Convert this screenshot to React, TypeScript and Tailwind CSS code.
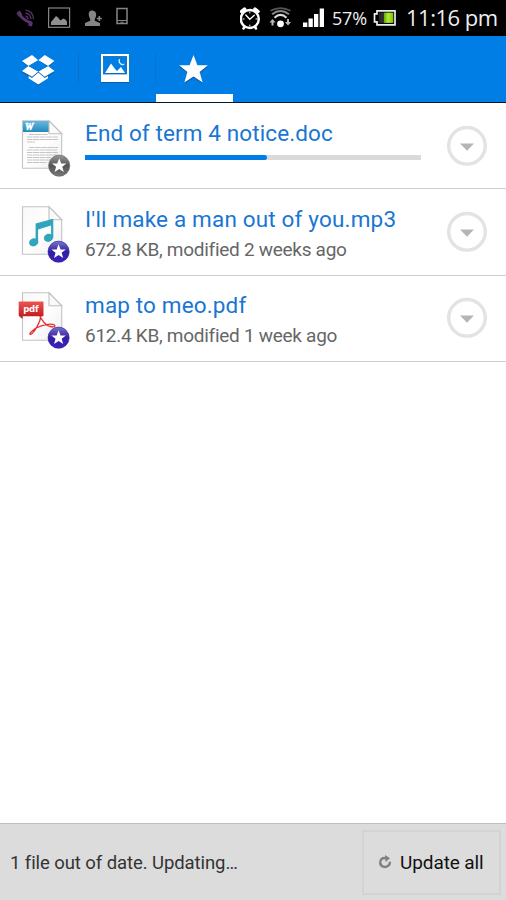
import React from "react";

const STAR = "M0 -10 L2.6 -3.2 L9.6 -3.1 L4.1 1.3 L6.1 8.3 L0 4.3 L-6.1 8.3 L-4.1 1.3 L-9.6 -3.1 L-2.6 -3.2Z";

function StatusBar() {
  return (
    <header className="flex h-9 shrink-0 bg-black text-[#eeeeee]">
      <svg className="h-9 w-[240px] shrink-0" viewBox="0 0 240 36">
        <g fill="none" stroke="#58346b" strokeWidth="1.3">
          <path d="M19 11.5Q20.500 19.500 31.500 23" strokeWidth="3" />
          <path d="M18 12l2.800 4M28.600 23.500l3.800 1" strokeWidth="4" />
          <path d="M25.500 16.200q2.200.3 2.700 3M25.500 13.200q5 .5 5.400 6M25.500 10.200q7.500.7 8 9" />
        </g>
        <rect x="48.600" y="8" width="21" height="19.300" fill="none" stroke="#858585" strokeWidth="1.200" />
        <path d="M51 25v-3l3-3.500 2-2.500 2 1.500 2.500 3 3-2 2.500 1.500 1 2v3z" fill="#909090" />
        <path d="M92 10.500c-2.700 0-3.500 2.200-3.200 4.500.2 2 1 3 1.400 4v1.800l-5.200 2.200v2.900h15v-2.900l-5.200-2.200V19c.4-1 1.200-2 1.400-4 .3-2.300-1.500-4.500-4.200-4.500z" fill="#858585" />
        <path d="M99.300 15.500v6M96.300 18.500h6" stroke="#000" strokeWidth="4" />
        <path d="M99.300 16v5M96.800 18.500h5" stroke="#858585" strokeWidth="1.600" />
        <rect x="117" y="8.500" width="10" height="15" fill="none" stroke="#858585" strokeWidth="1.500" />
        <path d="M117 20.500h10M120.500 22.200h3" stroke="#858585" strokeWidth="1" />
      </svg>
      <svg className="h-9 w-[90px] shrink-0" viewBox="240 0 90 36">
        <g fill="none" stroke="#fff" strokeLinecap="round">
          <circle cx="249.800" cy="19" r="9" strokeWidth="2.400" />
          <path d="M241.500 11.500l3-2.500M258 11.500l-3-2.500" strokeWidth="3.500" />
          <path d="M244.500 27l-1 1.500M255 27l1 1.500" strokeWidth="2.500" />
          <path d="M245.800 15l4 4.300 4.500-4" strokeWidth="1.300" />
          <path d="M249.800 12v1M249.800 25v1M243 19h1M256 19h1" strokeWidth="1" />
        </g>
        <circle cx="280.500" cy="23.800" r="3.400" fill="#fff" />
        <path d="M274.500 17.700q6-5.500 12 0" fill="none" stroke="#ddd" strokeWidth="2.200" />
        <path d="M272 14.200q8.500-6.500 17 0" fill="none" stroke="#8a8a8a" strokeWidth="2" />
        <path d="M270.500 10.800q10-5.500 20 0" fill="none" stroke="#555" strokeWidth="1.800" />
        <path d="M272.500 19l3 3.600h-2v3h-2v-3h-2zM288 25.600l3-3.600h-2v-3h-2v3h-2z" fill="#bbb" />
        <path d="M303 22.500h4.300V27H303zM308.500 18.500h4.300V27h-4.300zM314 14h4.300v13H314zM319.700 8.500h4.300V27h-4.300z" fill="#fff" />
      </svg>
      <span className="mt-[5px] w-[40px] whitespace-nowrap pl-[2px] font-['Open_Sans',sans-serif] text-[18px] leading-[27px] tracking-[-0.2px]">57%</span>
      <svg className="h-9 w-[30px] shrink-0" viewBox="370 0 30 36">
        <defs>
          <linearGradient id="charge"><stop stopColor="#222" /><stop offset=".36" stopColor="#333" /><stop offset=".4" stopColor="#6fbb00" /><stop offset=".65" stopColor="#b2e840" /><stop offset="1" stopColor="#79c400" /></linearGradient>
        </defs>
        <path d="M377 10.800h18v14h-18v-3h-2.500v-8h2.500z" fill="#000" stroke="#eee" strokeWidth="1.700" />
        <path d="M378.700 12.600h14.600v10.300h-14.600z" fill="url(#charge)" />
      </svg>
      <span className="mt-[3px] whitespace-nowrap pl-1.5 font-['Open_Sans',sans-serif] text-[22px] leading-[28px] tracking-[-0.5px]">11:16 pm</span>
    </header>
  );
}

function Tabs() {
  return (
    <nav className="flex h-[67px] shrink-0 border-b border-[#02172c] bg-[#007ee6]">
      <button className="my-[17px] w-[78.500px] border-r border-[#0873cd]" aria-label="Files">
        <svg className="-mt-[1px] ml-[18px] size-10" viewBox="18 52 40 40">
          <g transform="translate(0 1)" fill="#07549a" opacity=".65"><path d="M22 61l10-6 6.300 5.300 6.500-5.300 9.700 6-6.500 5 6.500 5-6 4.500-10.200 9.600L28 75.500 22 71l6.500-5z" /></g>
          <path d="M32 55l6.300 5.300L28.500 66 22 61zM44.700 55l9.800 6-6.500 5-9.700-5.700zM28.500 66l9.800 5.500-6.300 5.200L22 71zM48 66l6.500 5-9.800 5.700-6.400-5.200zM38.300 72.500l6.500 5.400 3.200-1.800v2.100l-9.700 6.300-9.700-6.300v-2.100l3.400 1.800z" fill="#fff" />
          <path d="M28.500 66l9.800-5.700L48 66l-9.700 5.500z" fill="#007ee6" />
        </svg>
      </button>
      <button className="my-[17px] w-[77px] border-r border-[#0873cd]" aria-label="Photos">
        <svg className="ml-[18px] size-10" viewBox="97 53 40 40">
          <rect x="101" y="55" width="28" height="28" fill="#075ba8" />
          <rect x="101" y="54" width="28" height="28" fill="#fff" />
          <rect x="103.600" y="56.500" width="23" height="17.500" fill="#007ee6" stroke="#0755a0" strokeWidth=".7" />
          <path d="M105 73l6-9.500 4.500 6 1.500 1.500 4-4 4 6z" fill="#fff" />
          <path d="M119.500 59c-.8 3.400 1.600 6 4.800 5.200-2.800 2.200-7-1.700-4.800-5.200z" fill="#fff" stroke="#fff" strokeWidth=".6" />
        </svg>
      </button>
      <button className="flex w-[77px] flex-col" aria-label="Favorites">
        <svg className="h-[58px] w-[77px]" viewBox="156 36 77 58">
          <path transform="translate(193.500 71) scale(1.500)" d={STAR} fill="#07529a" />
          <path transform="translate(193.500 70) scale(1.500)" d={STAR} fill="#fff" />
        </svg>
        <span className="h-2 w-full bg-white" />
      </button>
    </nav>
  );
}

type Kind = "doc" | "mp3" | "pdf";

function FileIcon({ kind }: { kind: Kind }) {
  const grad = `badge-${kind}`;
  const cx = kind === "doc" ? 59.2 : 58.6;
  return (
    <svg className="ml-[18px] h-[86px] w-[54px] shrink-0" viewBox="18 0 54 86">
      <defs>
        <linearGradient id={grad} x1="0" y1="0" x2="0" y2="1">
          <stop stopColor={kind === "doc" ? "#999" : "#7c73cc"} />
          <stop offset=".5" stopColor={kind === "doc" ? "#555" : "#3020a2"} />
          <stop offset="1" stopColor={kind === "doc" ? "#777" : "#3d20c0"} />
        </linearGradient>
        <linearGradient id={`paper-${kind}`} x1="0" y1="0" x2="1" y2="1"><stop stopColor="#f8f8f8" /><stop offset=".5" stopColor="#fff" /><stop offset="1" stopColor="#eee" /></linearGradient>
        <linearGradient id={`label-${kind}`} x1="0" y1="0" x2="0" y2="1"><stop stopColor={kind === "doc" ? "#65b9df" : "#ed5650"} /><stop offset="1" stopColor={kind === "doc" ? "#2489bd" : "#c51d20"} /></linearGradient>
      </defs>
      <path d="M22.500 17.800H49l12.700 13v34.400H22.500z" fill={`url(#paper-${kind})`} stroke="#c4c4c4" strokeWidth="1.100" />
      {kind === "doc" && (
        <>
          <path d="M23 18h26v11H23z" fill="url(#label-doc)" />
          <text x="25" y="26.800" fill="#fff" stroke="#fff" strokeWidth=".6" className="font-['Liberation_Serif',serif] text-[9.500px] font-bold italic">W</text>
          <path d="M29 31.500h19M27 34h31M27 36.500h31M27 39h8M29 44.500h29M27 47h30M27 49.500h31M27 52h31M27 54.500h24M27 57h24M27 59.500h20" stroke="#c4c4c4" strokeWidth="1" strokeDasharray="5 .5 7 .4" />
        </>
      )}
      <path d="M49 17.800v13h12.700z" fill="#fafafa" stroke="#c0c0c0" strokeWidth="1.100" />
      {kind === "mp3" && (
        <g fill="#30a5bd">
          <ellipse cx="33.700" cy="53.300" rx="4.700" ry="4" transform="rotate(-20 33.700 53.300)" />
          <ellipse cx="48.500" cy="48.800" rx="4.700" ry="4" transform="rotate(-20 48.500 48.800)" />
          <path d="M35.600 34.500l17.700-4.800V49h-2.200V36.500l-13 4v13h-2.500z" />
        </g>
      )}
      {kind === "pdf" && (
        <>
          <path d="M36 53q-3 2.200-5.700 4.800-1 1.700.4 1.500 2.800-1 6.300-7.500 3.500-6.300 3.900-11.300.2-3.200-1-2.500-.8 3.300 2.200 6.800 3.300 5.200 8 6.700 4.500 1 4.800-.4.300-2-5-1.900-7.500.8-13.900 3.800z" fill="none" stroke="#e52d31" strokeWidth="1.300" />
          <path d="M20.500 26.500h22.200q.8 0 .8.800v13.200q0 .8-.8.800H19.500l-.8-.8V27.300q0-.8.8-.8z" fill="url(#label-pdf)" />
          <path d="M19 41.300h3.500v2.500z" fill="#8d1616" />
          <text x="23.200" y="36.600" fill="#fff" textLength="15.500" className="font-['DejaVu_Sans',sans-serif] text-[8.500px] font-bold">pdf</text>
        </>
      )}
      <circle cx={cx} cy="62.700" r="10.600" fill={`url(#${grad})`} stroke={kind === "doc" ? "#666" : "#3022a4"} strokeWidth=".6" />
      <path transform={`translate(${cx} 62.800) scale(.75)`} d={STAR} fill="#fff" />
    </svg>
  );
}

function MoreButton() {
  return (
    <button className="mr-[18px] size-[42px]" aria-label="More">
      <svg className="size-full" viewBox="0 0 42 42">
        <circle cx="21" cy="20.800" r="18.300" fill="#fff" stroke="#e3e3e3" strokeWidth="3.400" />
        <path d="M14 18.500h14l-7 7.300z" fill="#b5b5b5" />
      </svg>
    </button>
  );
}

function Row({ kind, name, layout, spacing, detail }: { kind: Kind; name: string; layout: string; spacing: string; detail?: string }) {
  return (
    <li className={`flex items-start border-b border-[#cecece] ${layout}`}>
      <FileIcon kind={kind} />
      <div className="ml-[13px] w-[336px] pt-4">
        <p className={`whitespace-nowrap text-[22.500px] leading-7 text-[#1976d2] ${spacing}`}>{name}</p>
        {detail ? (
          <p className="mt-[5px] whitespace-nowrap text-[19px] leading-6 tracking-[-0.28px] text-[#666]">{detail}</p>
        ) : (
          <div className="mt-[8px] flex h-[5px] bg-[#dadada]"><span className="w-[182px] rounded-r-full bg-[#007ee6]" /></div>
        )}
      </div>
      <div className="mt-[22px] ml-auto"><MoreButton /></div>
    </li>
  );
}

export default function App() {
  return (
    <div className="flex h-[900px] w-[506px] flex-col overflow-hidden bg-white font-[Roboto,sans-serif]">
      <StatusBar />
      <Tabs />
      <ul className="grow">
        <Row kind="doc" name="End of term 4 notice.doc" layout="h-[86px]" spacing="tracking-[0.11px]" />
        <Row kind="mp3" name="I'll make a man out of you.mp3" layout="h-[87px]" spacing="tracking-[0.17px]" detail="672.8 KB, modified 2 weeks ago" />
        <Row kind="pdf" name="map to meo.pdf" layout="h-[86px] [&>*]:-translate-y-px" spacing="tracking-[0.15px]" detail="612.4 KB, modified 1 week ago" />
      </ul>
      <footer className="flex h-[77px] shrink-0 items-center justify-between border-t border-[#bdbdbd] bg-[#dcdcdc] pr-[5px] pl-[10px]">
        <span className="mt-[3px] whitespace-nowrap text-[18.500px] tracking-[-0.08px] text-[#333]">1 file out of date. Updating…</span>
        <button className="flex h-[65px] w-[139px] items-center border-2 border-[#d3d3d3] pl-[14px] text-[19px] text-[#111]">
          <svg className="mr-[7px] size-[15px] shrink-0" viewBox="0 0 15 15">
            <path d="M8 3.300C4 2.300 1.800 5 2.200 8c.6 4 5.200 5 8 2.800 1.300-1 1.800-2.300 1.800-4" fill="none" stroke="#808080" strokeWidth="2.400" />
            <path d="M7 0l5 3.300-4.500 3.700z" fill="#808080" />
          </svg>
          <span className="mt-[2px] whitespace-nowrap tracking-[-0.1px]">Update all</span>
        </button>
      </footer>
    </div>
  );
}
